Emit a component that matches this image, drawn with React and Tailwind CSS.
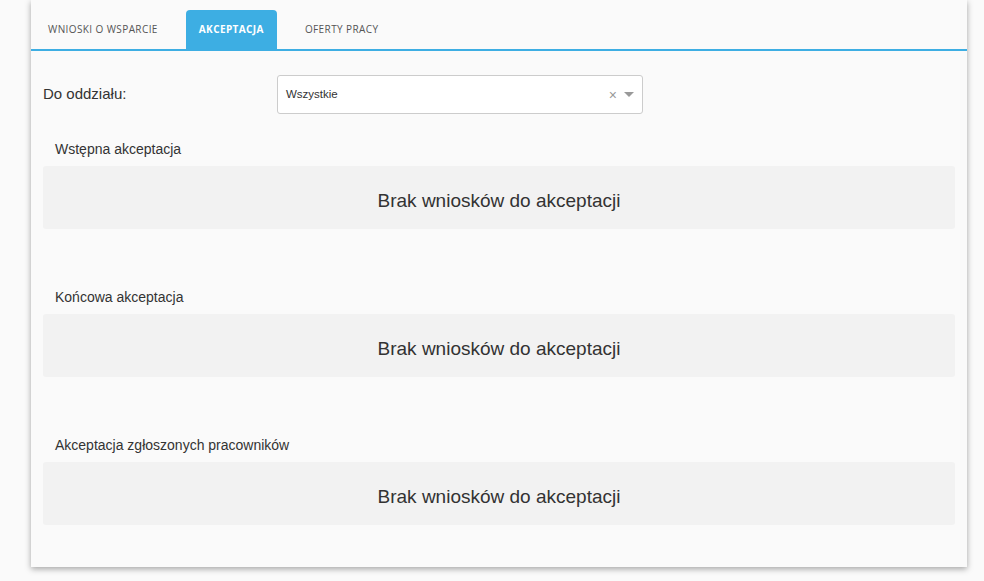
import React from 'react';

const tabs = ['WNIOSKI O WSPARCIE', 'AKCEPTACJA', 'OFERTY PRACY'];

const sections = [
  'Wstępna akceptacja',
  'Końcowa akceptacja',
  'Akceptacja zgłoszonych pracowników',
];

const Section = ({ title }) => (
  <div className="mb-[60px] last:mb-0">
    <div className="px-3 text-[14px] leading-[16px] text-[#333] mb-[9px]">{title}</div>
    <div className="h-[63px] rounded-[3px] bg-[#f2f2f2] flex items-center justify-center pt-[8px]">
      <span className="text-[19px] text-[#333]">Brak wniosków do akceptacji</span>
    </div>
  </div>
);

export default function App() {
  return (
    <div
      className="w-[984px] h-[581px] bg-[#fafafa] overflow-hidden"
      style={{ fontFamily: '"Liberation Sans", Arial, sans-serif' }}
    >
      <div className="ml-[31px] w-[936px] h-[567px] bg-[#fafafa] shadow-[0_2px_6px_rgba(0,0,0,0.35)]">
        {/* Tabs */}
        <div
          className="flex items-end h-[51px] border-b-2 border-[#3daee3] pl-[4px] gap-[15px]"
          style={{ fontFamily: '"Open Sans", sans-serif' }}
        >
          {tabs.map((t, i) => (
            <div
              key={t}
              className={`h-[39px] px-[13px] flex items-center text-[10px] tracking-[0.4px] rounded-t-[4px] ${
                i === 1 ? 'bg-[#3daee3] text-white font-bold' : 'text-[#555] font-medium'
              }`}
            >
              {t}
            </div>
          ))}
        </div>

        {/* Content */}
        <div className="px-[12px] pt-[24px]">
          <div className="flex items-start">
            <div className="w-[234px] pt-[8px] text-[15px] text-[#333]">Do oddziału:</div>
            <div className="w-[366px] h-[39px] border border-[#ccc] rounded-[3px] bg-white flex items-center pl-[8px] pr-[8px]">
              <span className="flex-1 text-[11.5px] text-[#333]">Wszystkie</span>
              <span className="text-[14px] text-[#999] mr-[7px] leading-none">×</span>
              <svg width="10" height="5" viewBox="0 0 10 5">
                <path d="M0 0 L10 0 L5 5 Z" fill="#999" />
              </svg>
            </div>
          </div>

          <div className="mt-[27px]">
            {sections.map((s) => (
              <Section key={s} title={s} />
            ))}
          </div>
        </div>
      </div>
    </div>
  );
}
